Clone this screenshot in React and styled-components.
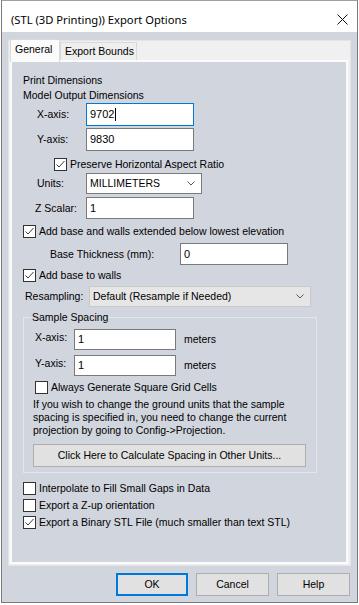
import React from "react";
import styled, { createGlobalStyle } from "styled-components";

const GlobalStyle = createGlobalStyle`
  html, body {
    margin: 0;
    padding: 0;
    background: #ffffff;
  }
  body {
    font-family: "Liberation Sans", Arial, sans-serif;
    font-size: 10.5px;
    color: #000;
  }
`;

const Window = styled.div`
  box-sizing: border-box;
  width: 357px;
  height: 603px;
  margin-left: 1px;
  border: 1px solid #7a7a7a;
  border-top-color: #a0a0a0;
  background: #d1d5de;
  display: flex;
  flex-direction: column;
`;

const TitleBar = styled.div`
  height: 31px;
  box-sizing: border-box;
  padding: 5px 9px 0 9px;
  background: #fff;
  display: flex;
  align-items: center;
  justify-content: space-between;
  font-family: "Noto Sans", "Open Sans", sans-serif;
  font-size: 11.2px;
  flex: none;
`;

const TabControl = styled.div`
  margin: 8px 6px 0 6px;
  height: 526px;
  box-sizing: border-box;
  border: 1px solid #e4e4e4;
  background: #f0f0f0;
  display: flex;
  flex-direction: column;
`;

const TabStrip = styled.div`
  height: 19px;
  display: flex;
  align-items: flex-end;
  padding-left: 1px;
  flex: none;
`;

const Tab = styled.div`
  box-sizing: border-box;
  width: ${(p) => p.$w}px;
  height: ${(p) => (p.$active ? 23 : 18)}px;
  margin-bottom: ${(p) => (p.$active ? -2 : 0)}px;
  padding: ${(p) => (p.$active ? 2 : 1)}px 0 0 4px;
  border: 1px solid #d9d9d9;
  border-bottom: none;
  background: ${(p) => (p.$active ? "#fbfbfb" : "#efefef")};
  line-height: 15px;
  white-space: nowrap;
  position: relative;
  z-index: ${(p) => (p.$active ? 1 : 0)};
`;

const Page = styled.div`
  flex: 1;
  margin: 0 2px 1px 1px;
  border: 2px solid #fbfbfb;
  background: #d1d5de;
  padding-left: 11px;
  display: flex;
  flex-direction: column;
`;

const Heading = styled.div`
  margin-top: 11px;
  line-height: 15px;
`;

const Row = styled.div`
  display: flex;
  align-items: ${(p) => p.$align || "center"};
  height: ${(p) => p.$h}px;
  margin-top: ${(p) => p.$mt}px;
  padding-left: ${(p) => p.$indent || 0}px;
  white-space: nowrap;
  line-height: 15px;
`;

const Label = styled.span`
  width: ${(p) => p.$w}px;
  flex: none;
  padding-top: ${(p) => p.$pt || 0}px;
`;

const TextBox = styled.div`
  box-sizing: border-box;
  width: ${(p) => p.$w}px;
  height: 100%;
  flex: none;
  border: 1px solid ${(p) => (p.$focus ? "#0078d7" : "#7a7a7a")};
  background: #fff;
  padding-left: 3px;
  display: flex;
  align-items: center;
  font-size: 11px;
`;

const Caret = styled.span`
  width: 1px;
  height: 13px;
  background: #000;
  margin-left: 1px;
`;

const Select = styled.div`
  box-sizing: border-box;
  width: ${(p) => p.$w}px;
  height: 100%;
  flex: none;
  border: 1px solid ${(p) => (p.$disabled ? "#c9c9c9" : "#7a7a7a")};
  background: ${(p) => (p.$disabled ? "#e6e6e6" : "#fff")};
  padding: 0 6px 0 3px;
  display: flex;
  align-items: center;
  justify-content: space-between;
`;

const Unit = styled.span`
  margin-left: 8px;
  padding-top: 3px;
`;

const Box = styled.span`
  box-sizing: border-box;
  width: 13px;
  height: 13px;
  flex: none;
  margin-right: 3px;
  border: 1px solid #333;
  background: #fff;
  display: flex;
  align-items: center;
  justify-content: center;
`;

const Group = styled.fieldset`
  box-sizing: border-box;
  width: 294px;
  margin: 3px 0 0 0;
  padding: 0 0 5px 0;
  border: 1px solid #e3e6eb;
  display: flex;
  flex-direction: column;
  min-width: 0;
`;

const Legend = styled.legend`
  margin-left: 7px;
  padding: 0 1px;
  line-height: 15px;
`;

const Note = styled.div`
  margin-top: 3px;
  padding-left: 9px;
  line-height: 13px;
  white-space: nowrap;
`;

const Button = styled.div`
  box-sizing: border-box;
  width: ${(p) => p.$w}px;
  height: 23px;
  flex: none;
  border: 1px solid ${(p) => (p.$default ? "#0078d7" : "#adadad")};
  box-shadow: ${(p) => (p.$default ? "inset 0 0 0 1px #0078d7" : "none")};
  background: #e1e1e1;
  display: flex;
  align-items: center;
  justify-content: center;
  line-height: 15px;
`;

const WideButton = styled(Button)`
  margin: 7px 0 0 9px;
`;

const Footer = styled.div`
  display: flex;
  justify-content: flex-end;
  gap: 8px;
  margin-top: 7px;
  padding-right: 7px;
`;

const Check = ({ checked }) => (
  <Box>
    {checked && (
      <svg width="11" height="11" viewBox="0 0 11 11">
        <polyline points="1.5,5.5 4,8 9.5,2" fill="none" stroke="#3c3c3c" strokeWidth="1" />
      </svg>
    )}
  </Box>
);

const Chevron = () => (
  <svg width="8" height="5" viewBox="0 0 8 5">
    <polyline points="0.5,0.5 4,4 7.5,0.5" fill="none" stroke="#5a5a5a" strokeWidth="1" />
  </svg>
);

const CheckRow = ({ mt, indent, checked, children }) => (
  <Row $h={15} $mt={mt} $indent={indent}>
    <Check checked={checked} />
    <span>{children}</span>
  </Row>
);

const App = () => {
  return (
    <>
      <GlobalStyle />
      <Window>
        <TitleBar>
          <span>(STL (3D Printing)) Export Options</span>
          <svg width="11" height="11" viewBox="0 0 11 11">
            <path d="M0.5 0.5 L10.5 10.5 M10.5 0.5 L0.5 10.5" stroke="#111" strokeWidth="1" />
          </svg>
        </TitleBar>

        <TabControl>
          <TabStrip>
            <Tab $active $w={50}>General</Tab>
            <Tab $w={77}>Export Bounds</Tab>
          </TabStrip>
          <Page>
            <Heading>
              Print Dimensions
              <br />
              Model Output Dimensions
            </Heading>

            <Row $h={23} $mt={0} $indent={14}>
              <Label $w={49}>X-axis:</Label>
              <TextBox $w={108} $focus>
                9702
                <Caret />
              </TextBox>
            </Row>
            <Row $h={23} $mt={2} $indent={14}>
              <Label $w={49}>Y-axis:</Label>
              <TextBox $w={108}>9830</TextBox>
            </Row>
            <CheckRow mt={6} indent={31} checked>
              Preserve Horizontal Aspect Ratio
            </CheckRow>
            <Row $h={21} $mt={1} $indent={14}>
              <Label $w={49}>Units:</Label>
              <Select $w={116}>
                <span>MILLIMETERS</span>
                <Chevron />
              </Select>
            </Row>
            <Row $h={22} $mt={3} $indent={12}>
              <Label $w={51}>Z Scalar:</Label>
              <TextBox $w={108}>1</TextBox>
            </Row>

            <CheckRow mt={5} checked>
              Add base and walls extended below lowest elevation
            </CheckRow>
            <Row $h={22} $mt={4} $indent={27}>
              <Label $w={130}>Base Thickness (mm):</Label>
              <TextBox $w={108}>0</TextBox>
            </Row>
            <CheckRow mt={3} checked>
              Add base to walls
            </CheckRow>
            <Row $h={21} $mt={3} $indent={2}>
              <Label $w={64}>Resampling:</Label>
              <Select $w={222} $disabled>
                <span>Default (Resample if Needed)</span>
                <Chevron />
              </Select>
            </Row>

            <Group>
              <Legend>Sample Spacing</Legend>
              <Row $h={21} $mt={4} $indent={11} $align="flex-start">
                <Label $w={39} $pt={1}>X-axis:</Label>
                <TextBox $w={102}>1</TextBox>
                <Unit>meters</Unit>
              </Row>
              <Row $h={21} $mt={5} $indent={11} $align="flex-start">
                <Label $w={39} $pt={1}>Y-axis:</Label>
                <TextBox $w={102}>1</TextBox>
                <Unit>meters</Unit>
              </Row>
              <CheckRow mt={4} indent={11}>
                Always Generate Square Grid Cells
              </CheckRow>
              <Note>
                If you wish to change the ground units that the sample
                <br />
                spacing is specified in, you need to change the current
                <br />
                projection by going to Config-&gt;Projection.
              </Note>
              <WideButton $w={273}>Click Here to Calculate Spacing in Other Units...</WideButton>
            </Group>

            <CheckRow mt={8}>Interpolate to Fill Small Gaps in Data</CheckRow>
            <CheckRow mt={2}>Export a Z-up orientation</CheckRow>
            <CheckRow mt={2} checked>
              Export a Binary STL File (much smaller than text STL)
            </CheckRow>
          </Page>
        </TabControl>

        <Footer>
          <Button $w={72} $default>OK</Button>
          <Button $w={73}>Cancel</Button>
          <Button $w={73}>Help</Button>
        </Footer>
      </Window>
    </>
  );
};

export default App;
